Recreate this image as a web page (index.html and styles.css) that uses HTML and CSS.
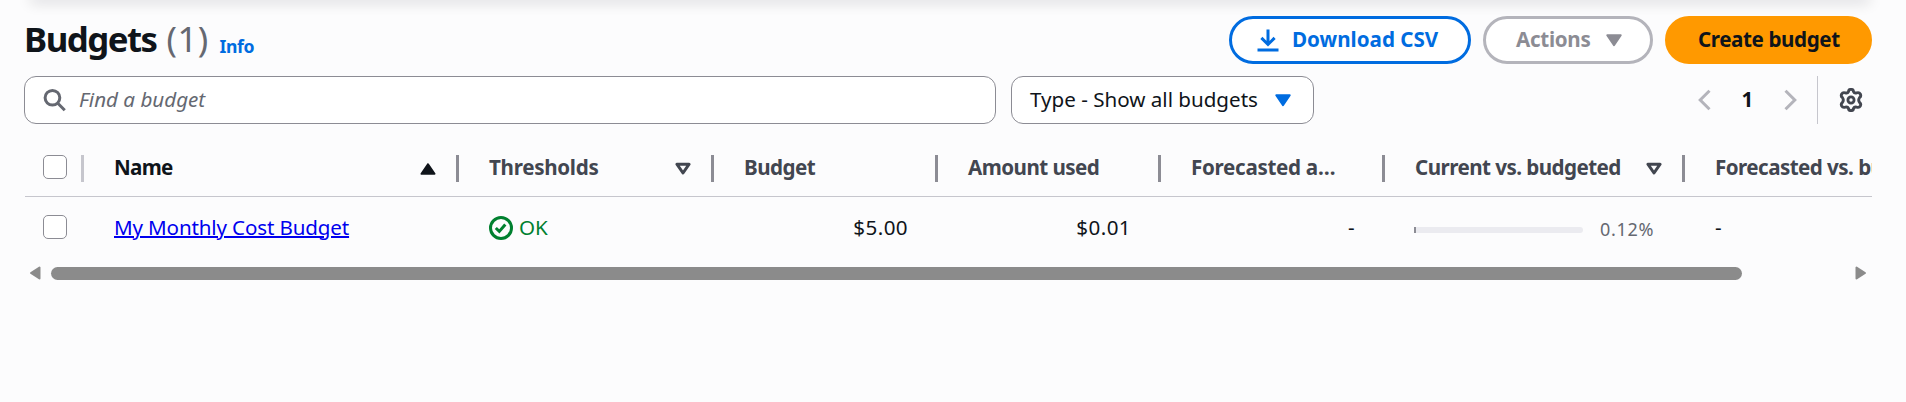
FILE: index.html
```html
<!DOCTYPE html>
<html lang="en">
<head>
<meta charset="utf-8">
<title>Budgets</title>
<link rel="stylesheet" href="styles.css">
</head>
<body>
<div class="card-shadow"></div>
<main class="panel">
  <header class="header">
    <h1 class="title"><span class="title-text">Budgets</span><span class="count">(1)</span></h1>
    <a class="info"><span>Info</span></a>
    <div class="actions">
      <button class="btn btn-normal"><svg class="icon" viewBox="0 0 16 16"><path d="M1 14.7h14M8 1v10M3.6 6.6 8 11l4.4-4.4" fill="none" stroke="currentColor" stroke-width="2"/></svg><span class="t-download">Download CSV</span></button>
      <button class="btn btn-disabled"><span class="t-actions">Actions</span><svg class="icon" viewBox="0 0 16 16"><path d="M3.5 4.8h9L8 11.5z" fill="currentColor" stroke="currentColor" stroke-width="1.3" stroke-linejoin="round"/></svg></button>
      <button class="btn btn-primary"><span class="t-create">Create budget</span></button>
    </div>
  </header>
  <div class="tools">
    <div class="search"><svg class="icon" viewBox="0 0 16 16"><path d="M11.2 6.7a4.9 4.9 0 1 1-9.8 0 4.9 4.9 0 0 1 9.8 0zM9.7 10.2l4.8 4.8" transform="translate(0 -.2)" fill="none" stroke="currentColor" stroke-width="2"/></svg><span class="t-find">Find a budget</span></div>
    <div class="select"><span class="t-type">Type - Show all budgets</span><svg class="icon" viewBox="0 0 16 16"><path d="M3.5 4.8h9L8 11.5z" fill="currentColor" stroke="currentColor" stroke-width="1.3" stroke-linejoin="round"/></svg></div>
    <div class="pager">
      <svg class="icon" viewBox="0 0 16 16"><path d="M11 1.8 4.8 8l6.2 6.2" fill="none" stroke="currentColor" stroke-width="2"/></svg>
      <span class="page">1</span>
      <svg class="icon" viewBox="0 0 16 16"><path d="M5 1.8 11.2 8 5 14.2" fill="none" stroke="currentColor" stroke-width="2"/></svg>
    </div>
    <div class="prefs"><svg class="icon" viewBox="0 0 24 24"><path d="M9.5 3.6Q9.6 1.4 12 1.4T14.5 3.6Q15.4 5.6 17.6 4.9Q20.2 4 21.3 6Q22.4 8.2 20.6 9.5Q18.8 12 20.6 14.5Q22.4 15.8 21.3 18Q20.2 20 17.6 19.1Q15.4 18.4 14.5 20.4Q14.4 22.6 12 22.6T9.5 20.4Q8.6 18.4 6.4 19.1Q3.8 20 2.7 18Q1.6 15.8 3.4 14.5Q5.2 12 3.4 9.5Q1.6 8.2 2.7 6Q3.8 4 6.4 4.9Q8.6 5.6 9.5 3.6Z" fill="none" stroke="currentColor" stroke-width="2.9" stroke-linejoin="round"/><circle cx="12" cy="12" r="3.1" fill="none" stroke="currentColor" stroke-width="2.8"/></svg></div>
  </div>
  <div class="table">
    <div class="row head">
      <div class="cell sel light"><i class="check"></i></div>
      <div class="cell active"><span class="t-name">Name</span><svg class="icon" viewBox="0 0 24 24"><path d="M5.5 18.8h13L12 9.2z" fill="currentColor" stroke="currentColor" stroke-width="2" stroke-linejoin="round"/></svg></div>
      <div class="cell"><span class="t-thresholds">Thresholds</span><svg class="icon" viewBox="0 0 24 24"><path d="M5.900 9.200h12.200L12 18z" fill="none" stroke="currentColor" stroke-width="3" stroke-linejoin="round"/></svg></div>
      <div class="cell"><span class="t-budget">Budget</span></div>
      <div class="cell"><span class="t-amount">Amount used</span></div>
      <div class="cell"><span class="t-forecast">Forecasted a…</span></div>
      <div class="cell"><span class="t-current">Current vs. budgeted</span><svg class="icon" viewBox="0 0 24 24"><path d="M5.900 9.200h12.200L12 18z" fill="none" stroke="currentColor" stroke-width="3" stroke-linejoin="round"/></svg></div>
      <div class="cell last"><span class="t-current">Forecasted vs. budgeted</span></div>
    </div>
    <div class="row body">
      <div class="cell sel"><i class="check"></i></div>
      <div class="cell"><a class="link">My Monthly Cost Budget</a></div>
      <div class="cell ok"><svg class="icon" viewBox="0 0 24 24"><circle cx="12" cy="12" r="10.5" fill="none" stroke="currentColor" stroke-width="3"/><path d="m6.8 12 3.5 3.4 6-7" fill="none" stroke="currentColor" stroke-width="3"/></svg><span>OK</span></div>
      <div class="cell num"><span>$5.00</span></div>
      <div class="cell num"><span>$0.01</span></div>
      <div class="cell num"><span>-</span></div>
      <div class="cell usage"><span class="bar"><span class="fill"></span></span><span class="pct">0.12%</span></div>
      <div class="cell last"><span>-</span></div>
    </div>
  </div>
  <div class="scrollbar">
    <svg class="arrow" viewBox="0 0 12 14"><path d="M10.500 1.500v11L2 7z" fill="currentColor" stroke="currentColor" stroke-width="2" stroke-linejoin="round"/></svg>
    <span class="thumb"></span>
    <svg class="arrow" viewBox="0 0 12 14"><path d="M1.500 1.500v11L10 7z" fill="currentColor" stroke="currentColor" stroke-width="2" stroke-linejoin="round"/></svg>
  </div>
</main>
</body>
</html>
```
FILE: styles.css
```css
* { box-sizing: border-box; }
body {
  margin: 0;
  height: 402px;
  overflow: hidden;
  background: #fcfcfd;
  color: #0f141a;
  font: 20.6px/30px "Noto Sans", sans-serif;
}
span, a { white-space: nowrap; }
.icon { width: 24px; height: 24px; flex: none; display: block; }
.card-shadow {
  height: 1px;
  margin: -3px 40px 0 34px;
  border-radius: 24px;
  box-shadow: 0 1px 14px 4px rgba(0, 7, 22, .14);
}
.panel { padding: 18px 34px 0 24px; }
.header { display: flex; height: 48px; align-items: center; }
.title { display: flex; gap: 10px; margin: -3px 0 0; font-size: 34.8px; line-height: 48px; }
.title-text { letter-spacing: -1.5px; }
.count { font-weight: 400; color: #656871; letter-spacing: .4px; }
.info { margin-left: 11px; padding-top: 11px; font-size: 17.6px; font-weight: 700; color: #006ce0; letter-spacing: -.4px; }
.actions { display: flex; gap: 12px; margin-left: auto; }
.btn {
  display: flex;
  align-items: center;
  height: 48px;
  padding: 0;
  border: 3px solid;
  border-radius: 30px;
  background: #fff;
  font: 700 20.6px/30px "Noto Sans", sans-serif;
}
.btn span, .search span, .select span, .pager span { padding-bottom: 2px; }
.btn-normal { width: 242px; padding-left: 24px; gap: 12px; color: #006ce0; border-color: #006ce0; }
.btn-disabled { width: 170px; padding-left: 30px; gap: 12px; color: #8c8c94; border-color: #b4b4bb; }
.btn-primary { width: 207px; padding-left: 30px; border-color: #ff9900; background: #ff9900; color: #0f141a; }
.t-actions { letter-spacing: -.3px; }
.t-create { letter-spacing: -.4px; }
.tools { display: flex; margin-top: 12px; height: 48px; }
.search, .select { display: flex; align-items: center; border: 1px solid #8c8c94; border-radius: 12px; background: #fff; }
.search { width: 972px; padding-left: 18px; gap: 12px; color: #656871; font-style: italic; }
.select { width: 303px; margin-left: 15px; padding: 0 18px; justify-content: space-between; }
.select .icon { color: #006ce0; }
.pager { display: flex; align-items: center; margin-left: auto; color: #b4b4bb; }
.page { width: 61px; text-align: center; color: #0f141a; font-weight: 700; }
.prefs { display: flex; align-items: center; justify-content: flex-end; width: 55px; margin-left: 15px; padding-right: 9px; border-left: 1px solid #c6c6cd; color: #424650; }
.table { overflow: hidden; margin: 14px 0 0 1px; }
.row { display: grid; grid-template-columns: 59px 375px 255px 224px 223px 224px 300px 1fr; }
.head { height: 59px; padding-top: 17px; border-bottom: 1px solid #c6c6cd; color: #424650; font-weight: 700; }
.cell { display: flex; min-width: 0; align-items: center; justify-content: space-between; padding: 0 30px; }
.head .cell { height: 27px; padding: 0 16px 3px 30px; border-right: 3px solid #8c8c94; }
.head .light { padding-left: 18px; border-color: #c6c6cd; }
.head .last { border: 0; }
.head .active { color: #0f141a; }
.sel { padding: 0 0 0 18px; }
.check { flex: none; width: 24px; height: 24px; border: 1px solid #8c8c94; border-radius: 5px; background: #fff; }
.t-name { letter-spacing: -.7px; }
.t-thresholds, .t-forecast { letter-spacing: -.3px; }
.t-budget, .t-amount, .t-current { letter-spacing: -.55px; }
.body { height: 60px; }
.link { color: #0000ee; text-decoration: underline; text-decoration-thickness: 2px; letter-spacing: -.15px; }
.ok { color: #00802f; justify-content: flex-start; gap: 6px; }
.ok .icon { margin-top: 2px; }
.num { justify-content: flex-end; letter-spacing: .4px; }
.usage { justify-content: flex-start; padding: 6px 0 0 29px; gap: 17px; color: #656871; font-size: 18px; }
.pct { margin-top: -2px; letter-spacing: .7px; }
.bar { width: 169px; height: 6px; border-radius: 0 3px 3px 0; background: #ebebf0; }
.fill { display: block; width: 2px; height: 6px; background: #8c8c94; }
.scrollbar { display: flex; align-items: center; height: 14px; margin-top: 9px; padding: 0 5px; color: #8b8b8b; }
.arrow { width: 12px; height: 14px; }
.thumb { width: 1691px; height: 13px; margin: 0 auto 0 10px; border-radius: 7px; background: #8b8b8b; }
```
